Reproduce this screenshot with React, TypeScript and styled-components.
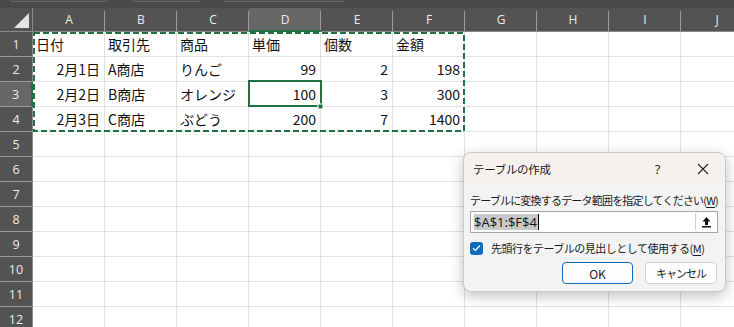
import React from 'react';
import styled, { createGlobalStyle } from 'styled-components';

const GlobalStyle = createGlobalStyle`
  html, body {
    margin: 0;
    padding: 0;
    width: 734px;
    height: 327px;
    overflow: hidden;
    background: #ffffff;
    font-family: "Noto Sans CJK JP", "Noto Sans", sans-serif;
  }
`;

const COLS = ['A', 'B', 'C', 'D', 'E', 'F', 'G', 'H', 'I', 'J'];
const GREEN = '#1f7244';

type Cell = { text: string; right?: boolean };

const data: Cell[][] = [
  [{ text: '日付' }, { text: '取引先' }, { text: '商品' }, { text: '単価' }, { text: '個数' }, { text: '金額' }],
  [{ text: '2月1日', right: true }, { text: 'A商店' }, { text: 'りんご' }, { text: '99', right: true }, { text: '2', right: true }, { text: '198', right: true }],
  [{ text: '2月2日', right: true }, { text: 'B商店' }, { text: 'オレンジ' }, { text: '100', right: true }, { text: '3', right: true }, { text: '300', right: true }],
  [{ text: '2月3日', right: true }, { text: 'C商店' }, { text: 'ぶどう' }, { text: '200', right: true }, { text: '7', right: true }, { text: '1400', right: true }],
];

const Sheet = styled.div`
  position: relative;
  width: 734px;
  height: 327px;
  overflow: hidden;
  background: #ffffff;
`;

const TopStrip = styled.div`
  height: 8px;
  background: #4a4a4a;
  display: flex;
  gap: 22px;
  padding-left: 10px;
  box-sizing: border-box;
`;

const Tab = styled.div<{ $w: number }>`
  width: ${(p) => p.$w}px;
  height: 3px;
  margin-top: -2px;
  border: 1px solid #6a6a6a;
  border-top: none;
  border-radius: 0 0 4px 4px;
`;

const Grid = styled.div`
  display: grid;
  grid-template-columns: 33px repeat(10, 72px);
  grid-template-rows: 24px repeat(12, 25px);
`;

const Corner = styled.div`
  background: #535353;
  border-right: 1px solid #8a8a8a;
  border-bottom: 1px solid #8a8a8a;
  position: relative;
  box-sizing: border-box;
  &::after {
    content: '';
    position: absolute;
    right: 3px;
    bottom: 3px;
    width: 0;
    height: 0;
    border-left: 15px solid transparent;
    border-bottom: 15px solid #e4e4e4;
  }
`;

const ColHead = styled.div<{ $active?: boolean }>`
  background: ${(p) => (p.$active ? '#676767' : '#535353')};
  color: #ececec;
  font-family: "Open Sans", "Noto Sans", sans-serif;
  font-size: 12px;
  display: flex;
  align-items: center;
  justify-content: center;
  box-sizing: border-box;
  border-bottom: ${(p) => (p.$active ? `2px solid ${GREEN}` : '1px solid #8a8a8a')};
  position: relative;
  &::after {
    content: '';
    position: absolute;
    right: 0;
    top: 3px;
    bottom: 0;
    width: 1px;
    background: #9a9a9a;
  }
`;

const RowHead = styled.div<{ $active?: boolean }>`
  background: ${(p) => (p.$active ? '#676767' : '#535353')};
  color: #ececec;
  font-family: "Open Sans", "Noto Sans", sans-serif;
  font-size: 12.5px;
  display: flex;
  align-items: center;
  justify-content: center;
  box-sizing: border-box;
  border-bottom: 1px solid #9a9a9a;
  border-right: ${(p) => (p.$active ? `2px solid ${GREEN}` : '1px solid #8a8a8a')};
`;

const DataCell = styled.div<{ $right?: boolean }>`
  box-sizing: border-box;
  border-right: 1px solid #e1e1e1;
  border-bottom: 1px solid #e1e1e1;
  font-size: 14px;
  color: #111;
  display: flex;
  align-items: center;
  justify-content: ${(p) => (p.$right ? 'flex-end' : 'flex-start')};
  padding: 0 4px 0 3px;
  white-space: nowrap;
  overflow: visible;
`;

const Overlay = styled.svg`
  position: absolute;
  left: 0;
  top: 0;
  pointer-events: none;
`;

const Dialog = styled.div`
  position: absolute;
  left: 463px;
  top: 152px;
  width: 263px;
  height: 140px;
  background: #f3f3f3;
  border: 1px solid #c9c9c9;
  border-radius: 8px;
  box-sizing: border-box;
  box-shadow: 0 4px 14px rgba(0, 0, 0, 0.25);
  overflow: hidden;
  display: flex;
  flex-direction: column;
  font-size: 11px;
  color: #1b1b1b;
`;

const TitleBar = styled.div`
  height: 31px;
  flex-shrink: 0;
  background: #f7f1ee;
  display: flex;
  align-items: center;
  padding-left: 9px;
`;

const Title = styled.span`
  flex: 1;
  font-size: 11.5px;
  letter-spacing: -0.3px;
`;

const TitleBtn = styled.span<{ $w: number }>`
  width: ${(p) => p.$w}px;
  display: flex;
  justify-content: center;
  font-family: "Open Sans", sans-serif;
  font-size: 13px;
`;

const Body = styled.div`
  display: flex;
  flex-direction: column;
  padding: 7px 7px 0 6px;
`;

const Label = styled.div`
  font-size: 11px;
  line-height: 18px;
  white-space: nowrap;
  letter-spacing: -0.8px;
`;

const U = styled.span`
  text-decoration: underline;
  text-underline-offset: 2px;
`;

const Input = styled.div`
  margin-top: 2px;
  height: 22px;
  background: #fff;
  border: 1px solid #a6a6a6;
  box-sizing: border-box;
  display: flex;
  align-items: center;
  padding-left: 3px;
`;

const Selected = styled.span`
  background: #c9c9c9;
  font-family: "Open Sans", sans-serif;
  font-size: 13px;
  line-height: 16px;
  color: #111;
  padding-right: 1px;
`;

const Caret = styled.span`
  width: 1px;
  height: 16px;
  background: #000;
`;

const Spacer = styled.div`
  flex: 1;
`;

const PickBtn = styled.div`
  width: 21px;
  height: 20px;
  border-left: 1px solid #cfcfcf;
  border-radius: 3px;
  background: #fff;
  display: flex;
  align-items: center;
  justify-content: center;
`;

const CheckRow = styled.div`
  margin-top: 6px;
  height: 18px;
  display: flex;
  align-items: center;
  gap: 8px;
  font-size: 11px;
  letter-spacing: -0.5px;
  white-space: nowrap;
`;

const CheckBox = styled.span`
  width: 13px;
  height: 13px;
  border-radius: 3px;
  background: #0f6cbd;
  display: flex;
  align-items: center;
  justify-content: center;
  flex-shrink: 0;
`;

const Buttons = styled.div`
  margin-top: 5px;
  display: flex;
  justify-content: flex-end;
  gap: 12px;
  padding-right: 1px;
`;

const Button = styled.div<{ $primary?: boolean }>`
  width: ${(p) => (p.$primary ? 71 : 72)}px;
  height: 22px;
  box-sizing: border-box;
  background: #fdfdfd;
  border: 1px solid ${(p) => (p.$primary ? '#0f6cbd' : '#d0d0d0')};
  border-radius: 4px;
  display: flex;
  align-items: center;
  justify-content: center;
  font-size: ${(p) => (p.$primary ? 12 : 11)}px;
  letter-spacing: ${(p) => (p.$primary ? 0 : -1)}px;
`;

const colX = (i: number) => 33 + i * 72;
const rowY = (i: number) => 32 + i * 25;

export default function App() {
  return (
    <>
      <GlobalStyle />
      <Sheet>
        <TopStrip>
          <Tab $w={97} />
          <Tab $w={68} />
          <Tab $w={120} />
        </TopStrip>
        <Grid>
          <Corner />
          {COLS.map((c) => (
            <ColHead key={c} $active={c === 'D'}>
              {c}
            </ColHead>
          ))}
          {[...Array(12)].map((_, r) => (
            <React.Fragment key={r}>
              <RowHead $active={r === 2}>{r + 1}</RowHead>
              {COLS.map((c, ci) => {
                const cell = data[r] && data[r][ci];
                return (
                  <DataCell key={c} $right={cell?.right}>
                    {cell ? cell.text : ''}
                  </DataCell>
                );
              })}
            </React.Fragment>
          ))}
        </Grid>

        <Overlay width={734} height={327}>
          <rect
            x={colX(0) + 1}
            y={rowY(0) + 1}
            width={colX(6) - colX(0) - 2}
            height={rowY(4) - rowY(0) - 2}
            fill="none"
            stroke={GREEN}
            strokeWidth={2}
            strokeDasharray="6 3"
          />
          <rect
            x={colX(3)}
            y={rowY(2) - 1}
            width={72}
            height={25}
            fill="none"
            stroke={GREEN}
            strokeWidth={2}
          />
          <rect x={colX(4) - 3} y={rowY(3) - 3} width={5} height={5} fill={GREEN} stroke="#fff" strokeWidth={1} />
        </Overlay>

        <Dialog>
          <TitleBar>
            <Title>テーブルの作成</Title>
            <TitleBtn $w={47}>?</TitleBtn>
            <TitleBtn $w={44}>
              <svg width="12" height="12" viewBox="0 0 12 12">
                <path d="M1 1L11 11M11 1L1 11" stroke="#222" strokeWidth="1.1" />
              </svg>
            </TitleBtn>
          </TitleBar>
          <Body>
            <Label>
              テーブルに変換するデータ範囲を指定してください(<U>W</U>)
            </Label>
            <Input>
              <Selected>$A$1:$F$4</Selected>
              <Caret />
              <Spacer />
              <PickBtn>
                <svg width="11" height="12" viewBox="0 0 11 12">
                  <path d="M5.5 1L1.5 5.5H4V9H7V5.5H9.5Z" fill="#111" />
                  <path d="M1 10.8H10" stroke="#111" strokeWidth="1.4" />
                </svg>
              </PickBtn>
            </Input>
            <CheckRow>
              <CheckBox>
                <svg width="9" height="8" viewBox="0 0 9 8">
                  <path d="M1 4.2L3.4 6.5L8 1.5" stroke="#fff" strokeWidth="1.2" fill="none" />
                </svg>
              </CheckBox>
              <span>
                先頭行をテーブルの見出しとして使用する(<U>M</U>)
              </span>
            </CheckRow>
            <Buttons>
              <Button $primary>OK</Button>
              <Button>キャンセル</Button>
            </Buttons>
          </Body>
        </Dialog>
      </Sheet>
    </>
  );
}
